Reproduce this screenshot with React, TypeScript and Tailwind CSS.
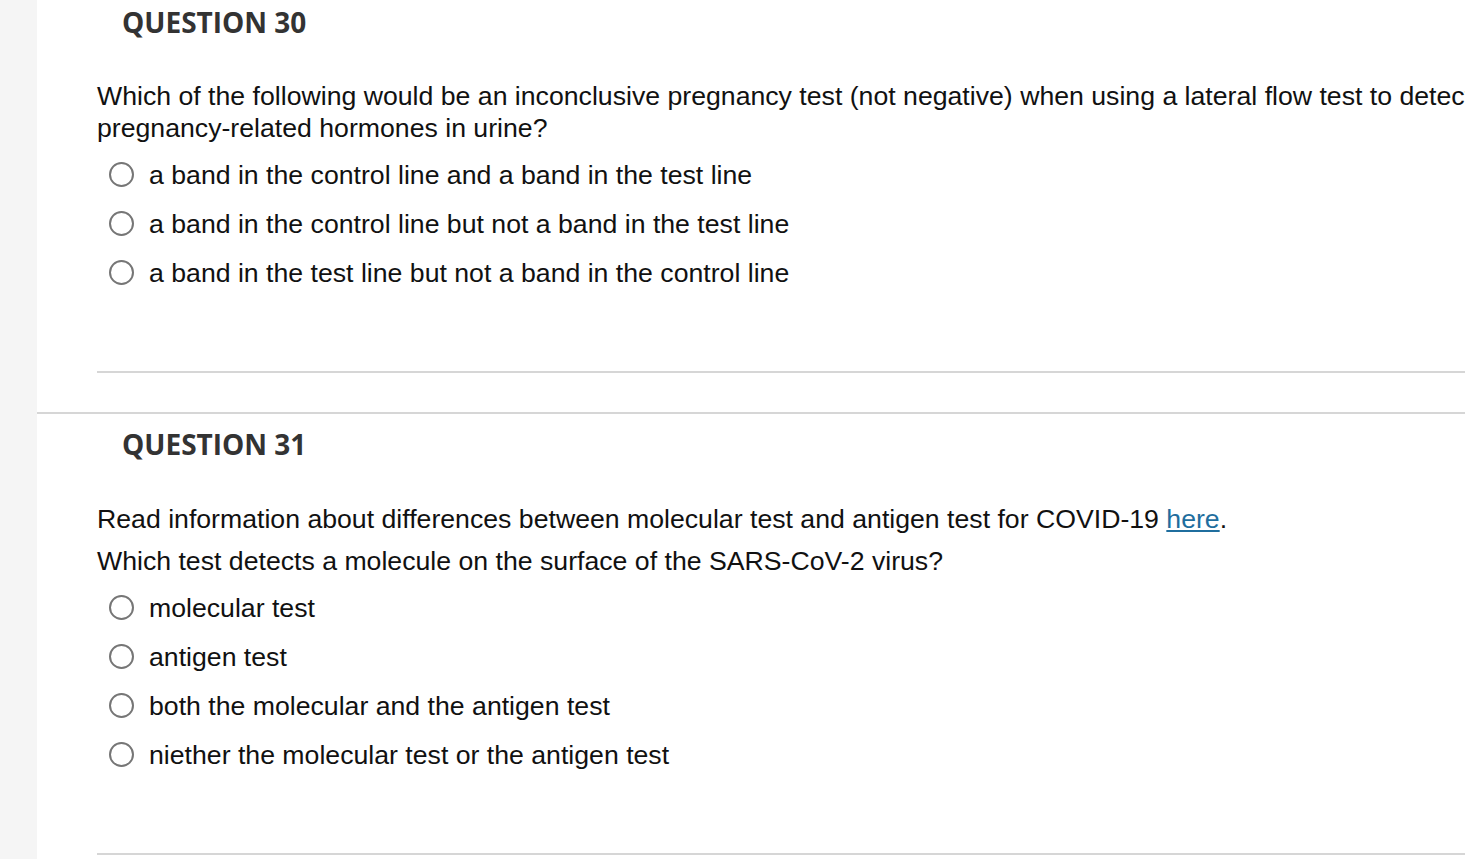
import React from "react";

const sans = { fontFamily: '"Liberation Sans", Arial, sans-serif' };

function Radio({ label }: { label: string }) {
  return (
    <label className="flex items-center h-[49px] pl-[12px] whitespace-nowrap">
      <span className="w-[25px] h-[25px] rounded-full border-2 border-[#767676] bg-white shrink-0" />
      <span className="ml-[15px] text-[26.67px] text-[#111]">{label}</span>
    </label>
  );
}

function Heading({ children }: { children: React.ReactNode }) {
  return (
    <h2 className="pl-[85px] text-[28px] leading-[40px] font-bold text-[#333] font-['Open_Sans',sans-serif]">
      {children}
    </h2>
  );
}

export default function App() {
  return (
    <div className="flex w-[1465px] h-[859px] overflow-hidden bg-white" style={sans}>
      <div className="w-[37px] shrink-0 bg-[#f5f5f5]" />
      <div className="flex-1 min-w-0">
        {/* Question 30 */}
        <section>
          <div className="pt-[2px] h-[80px]">
            <Heading>QUESTION 30</Heading>
          </div>
          <div className="pl-[60px]">
            <p className="text-[26.67px] leading-[32px] text-[#111] whitespace-nowrap">
              Which of the following would be an inconclusive pregnancy test (not negative) when using a lateral flow test to detect
              <br />
              pregnancy-related hormones in urine?
            </p>
            <div className="mt-[6px]">
              <Radio label="a band in the control line and a band in the test line" />
              <Radio label="a band in the control line but not a band in the test line" />
              <Radio label="a band in the test line but not a band in the control line" />
            </div>
            <div className="mt-[74px] border-t-2 border-[#d6d6d6]" />
          </div>
          <div className="mt-[39px] border-t-2 border-[#d6d6d6]" />
        </section>

        {/* Question 31 */}
        <section>
          <div className="pt-[10px] h-[89px]">
            <Heading>QUESTION 31</Heading>
          </div>
          <div className="pl-[60px]">
            <p className="text-[26.67px] leading-[32px] text-[#111] whitespace-nowrap">
              Read information about differences between molecular test and antigen test for COVID-19{" "}
              <a href="#" className="text-[#1f6e9e] underline">here</a>.
            </p>
            <p className="mt-[10px] text-[26.67px] leading-[32px] text-[#111] whitespace-nowrap">
              Which test detects a molecule on the surface of the SARS-CoV-2 virus?
            </p>
            <div className="mt-[6px]">
              <Radio label="molecular test" />
              <Radio label="antigen test" />
              <Radio label="both the molecular and the antigen test" />
              <Radio label="niether the molecular test or the antigen test" />
            </div>
            <div className="mt-[74px] border-t-2 border-[#d6d6d6]" />
          </div>
        </section>
      </div>
    </div>
  );
}
